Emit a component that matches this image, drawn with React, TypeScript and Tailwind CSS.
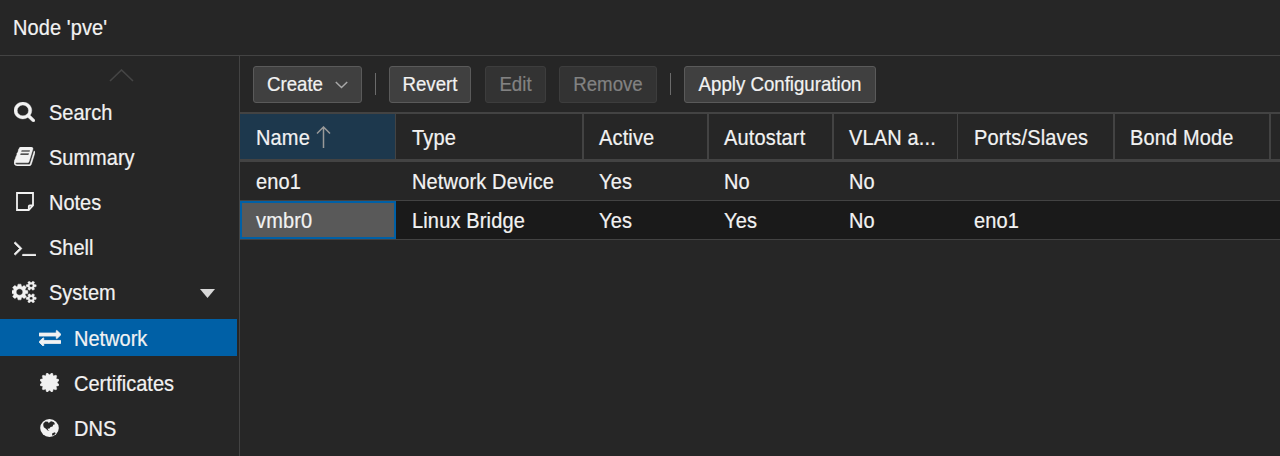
import React from "react";

const GEAR_SMALL =
  "v140q0 16-149 31-12 27-30 52 51 113 51 138 0 4-4 7-122 71-124 71-8 0-46-47t-52-68q-20 2-30 2t-30-2q-14 21-52 68t-46 47q-2 0-124-71-4-3-4-7 0-25 51-138-18-25-30-52-149-15-149-31v-140q0-16 149-31 13-29 30-52-51-113-51-138 0-4 4-7 4-2 35-20t59-34 30-16q8 0 46 46.5t52 67.5q20-2 30-2t30 2q51-71 92-112l6-2q4 0 124 70 4 3 4 7 0 25-51 138 17 23 30 52 149 15 149 31z";

const paths = {
  search:
    "M1216 832q0-185-131.5-316.5t-316.5-131.5-316.5 131.5-131.5 316.5 131.5 316.5 316.5 131.5 316.5-131.5 131.5-316.5zm512 832q0 52-38 90t-90 38q-54 0-90-38l-343-342q-179 124-399 124-143 0-273.5-55.5t-225-150-150-225-55.5-273.5 55.5-273.5 150-225 225-150 273.5-55.5 273.5 55.5 225 150 150 225 55.5 273.5q0 220-124 399l343 343q37 37 37 90z",
  book: "M1703 478q40 57 18 129l-275 906q-19 64-76.5 107.5t-122.5 43.5h-923q-77 0-148.5-53.5t-99.5-131.5q-24-67-2-127 0-4 3-27t4-37q1-8-3-21.5t-3-19.5q2-11 8-21t16.5-23.5 16.5-23.5q23-38 45-91.5t30-91.5q3-10 .5-30t-.5-28q3-11 17-28t17-23q21-36 42-92t25-90q1-9-2.5-32t.5-28q4-13 22-30.5t22-22.5q19-26 42.5-84.5t27.5-96.5q1-8-3-25.5t-2-26.5q2-8 9-18t18-23 17-21q8-12 16.5-30.5t15-35 16-36 19.5-32 26.5-23.5 36-11.5 47.5 5.5l-1 3q38-9 51-9h761q74 0 114 56t18 130l-274 906q-36 119-71.5 153.5t-128.5 34.5h-869q-27 0-38 15-11 16-1 43 24 70 144 70h923q29 0 56-15.5t35-41.5l300-987q7-22 5-57 38 15 59 43zm-1064 2q-4 13 2 22.5t20 9.5h608q13 0 25.5-9.5t16.5-22.5l21-64q4-13-2-22.5t-20-9.5h-608q-13 0-25.5 9.5t-16.5 22.5zm-83 256q-4 13 2 22.5t20 9.5h608q13 0 25.5-9.5t16.5-22.5l21-64q4-13-2-22.5t-20-9.5h-608q-13 0-25.5 9.5t-16.5 22.5z",
  terminal:
    "M649 983l-466 466q-10 10-23 10t-23-10l-50-50q-10-10-10-23t10-23l393-393-393-393q-10-10-10-23t10-23l50-50q10-10 23-10t23 10l466 466q10 10 10 23t-10 23zm1079 457v64q0 14-9 23t-23 9h-960q-14 0-23-9t-9-23v-64q0-14 9-23t23-9h960q14 0 23 9t9 23z",
  cogs:
    "M832 896q0-106-75-181t-181-75-181 75-75 181 75 181 181 75 181-75 75-181zm768 512q0-52-38-90t-90-38-90 38-38 90q0 53 37.5 90.5t90.5 37.5 90.5-37.5 37.5-90.5zm0-1024q0-52-38-90t-90-38-90 38-38 90q0 53 37.5 90.5t90.5 37.5 90.5-37.5 37.5-90.5zm-384 421v185q0 10-7 19.5t-16 10.5l-155 24q-11 35-32 76 34 48 90 115 7 11 7 20 0 12-7 19-23 30-82.5 89.5t-78.5 59.5q-11 0-21-7l-115-90q-37 19-77 31-11 108-23 155-7 24-30 24h-186q-11 0-20-7.5t-10-17.5l-23-153q-34-10-75-31l-118 89q-7 7-20 7-11 0-21-8-144-133-144-160 0-9 7-19 10-14 41-53t47-61q-23-44-35-82l-152-24q-10-1-17-9.5t-7-19.5v-185q0-10 7-19.5t16-10.5l155-24q11-35 32-76-34-48-90-115-7-11-7-20 0-12 7-20 22-30 82-89t79-59q11 0 21 7l115 90q34-18 77-32 11-108 23-154 7-24 30-24h186q11 0 20 7.5t10 17.5l23 153q34 10 75 31l118-89q8-7 20-7 11 0 21 8 144 133 144 160 0 8-7 19-12 16-42 54t-45 60q23 48 34 82l152 23q10 2 17 10.5t7 19.5zm640 533" +
    GEAR_SMALL +
    "m0-1024" +
    GEAR_SMALL,
  exchange:
    "M1792 1184v192q0 13-9.5 22.5t-22.5 9.5h-1376v192q0 13-9.5 22.5t-22.5 9.5q-12 0-24-10l-319-320q-9-9-9-22 0-14 9-23l320-320q9-9 23-9 13 0 22.5 9.5t9.5 22.5v192h1376q13 0 22.5 9.5t9.5 22.5zm0-544q0 14-9 23l-320 320q-9 9-23 9-13 0-22.5-9.5t-9.5-22.5v-192h-1376q-13 0-22.5-9.5t-9.5-22.5v-192q0-13 9.5-22.5t22.5-9.5h1376v-192q0-14 9-23t23-9q12 0 24 10l319 319q9 9 9 23z",
  certificate:
    "M1504 896l138 135q30 28 20 70-12 41-52 51l-188 48 53 186q12 41-19 70-29 31-70 19l-186-53-48 188q-10 40-51 52-12 2-19 2-31 0-51-22l-135-138-135 138q-28 30-70 20-41-11-51-52l-48-188-186 53q-41 12-70-19-31-29-19-70l53-186-188-48q-40-10-52-51-10-42 20-70l138-135-138-135q-30-28-20-70 12-41 52-51l188-48-53-186q-12-41 19-70 29-31 70-19l186 53 48-188q10-41 51-51 41-12 70 19l135 139 135-139q29-30 70-19 41 10 51 51l48 188 186-53q41-12 70 19 31 29 19 70l-53 186 188 48q40 10 52 51 10 42-20 70z",
};

function Glyph({ d, box, className, weight = 0 }: { d: string; box: string; className: string; weight?: number }) {
  return (
    <svg
      viewBox={box}
      className={className}
      fill="currentColor"
      stroke="currentColor"
      strokeWidth={weight}
      preserveAspectRatio="none"
      aria-hidden="true"
    >
      <path d={d} />
    </svg>
  );
}

function NoteIcon() {
  return (
    <svg className="h-[19px] w-[18px]" viewBox="0 0 18 19" fill="none" stroke="currentColor" strokeWidth="1.8" aria-hidden="true">
      <path d="M12.5 18H1V1h16v12.5L12.8 18v-3.5q0-1 1-1H17" />
    </svg>
  );
}

function GlobeIcon() {
  return (
    <svg className="h-[18px] w-[19px]" viewBox="0 0 19 18" aria-hidden="true">
      <ellipse cx="9.5" cy="9" rx="9.3" ry="9" fill="currentColor" />
      <path
        fill="#262626"
        d="M3.5 4.2 5.5 2.6 8 2.8 8.8 4.2 10 2.7 11.5 2.2 14 3.2 15 5.2 13.2 5.8 12.6 7.4 10.6 8 9.2 9.8 7.6 9.4 8.2 11.2 9.6 12 8 11.8 5.6 9.6 3.8 8.2 3.2 6zM12.3 14.2l2.7-1 .6 1.2-1.8 1.8-1.8.4z"
      />
    </svg>
  );
}

function Label({ children }: { children: React.ReactNode }) {
  return (
    <span className="inline-block translate-y-[0.5px] scale-y-[1.06] [-webkit-text-stroke:0.2px_currentColor]">{children}</span>
  );
}

type Item = { label: string; icon: React.ReactNode; sub?: boolean; active?: boolean; caret?: boolean };

const items: Item[] = [
  { label: "Search", icon: <Glyph d={paths.search} box="64 128 1664 1664" className="h-[20px] w-[21px]" weight={30} /> },
  { label: "Summary", icon: <Glyph d={paths.book} box="64 128 1664 1536" className="h-[19px] w-[21px]" weight={30} /> },
  { label: "Notes", icon: <NoteIcon /> },
  { label: "Shell", icon: <Glyph d={paths.terminal} box="64 384 1664 1152" className="mt-[3px] h-[15px] w-[22px]" weight={50} /> },
  { label: "System", icon: <Glyph d={paths.cogs} box="0 0 1920 1792" className="h-[22px] w-[25px]" weight={35} />, caret: true },
  {
    label: "Network",
    icon: <Glyph d={paths.exchange} box="0 160 1792 1472" className="h-[17px] w-[22px]" weight={70} />,
    sub: true,
    active: true,
  },
  { label: "Certificates", icon: <Glyph d={paths.certificate} box="128 128 1536 1536" className="h-[19px] w-[19px]" weight={40} />, sub: true },
  { label: "DNS", icon: <GlobeIcon />, sub: true },
];

function Sidebar() {
  return (
    <nav className="flex w-[240px] shrink-0 flex-col border-r border-[#434343]">
      <div className="flex h-[33px] justify-center pt-[13px] pl-[3px]">
        <svg className="h-[13px] w-[25px]" viewBox="0 0 25 13" fill="none" stroke="#454545" strokeWidth="1.6" aria-hidden="true">
          <path d="M1 12 12.5 1 24 12" />
        </svg>
      </div>
      {items.map((it) => (
        <div key={it.label} className="flex h-[45.2px] shrink-0 items-center">
          <div className={`flex h-[37px] w-[237px] items-center ${it.active ? "bg-[#0060a6]" : ""} ${it.sub ? "pl-[25px]" : ""}`}>
            <span className="flex w-[49px] justify-center">{it.icon}</span>
            <span className="flex-1">
              <Label>{it.label}</Label>
            </span>
            {it.caret && (
              <svg className="mt-[2px] mr-[22px] h-[9px] w-[15px]" viewBox="0 0 15 9" fill="#d8d8d8" aria-hidden="true">
                <path d="M0 0h15L7.5 9z" />
              </svg>
            )}
          </div>
        </div>
      ))}
    </nav>
  );
}

function Button({ children, className, disabled }: { children: React.ReactNode; className: string; disabled?: boolean }) {
  return (
    <button
      disabled={disabled}
      className={`flex h-[37px] items-center justify-center rounded-[3px] border text-[18.67px] tracking-normal whitespace-nowrap ${
        disabled ? "border-[#3d3d3d] bg-[#333333] text-[#828282]" : "border-[#5a5a5a] bg-[#404040] text-[#f2f2f2]"
      } ${className}`}
    >
      {children}
    </button>
  );
}

function Toolbar() {
  return (
    <div className="flex h-[58px] items-start border-b-2 border-[#434343] pt-[10px] pl-[13px]">
      <Button className="w-[109px] gap-[12px]">
        <Label>Create</Label>
        <svg className="h-[8px] w-[13px]" viewBox="0 0 13 8" fill="none" stroke="#a8a8a8" strokeWidth="1.5" aria-hidden="true">
          <path d="M.8 1 6.5 6.5 12.2 1" />
        </svg>
      </Button>
      <i className="mt-[7px] ml-[13px] h-[22px] w-px bg-[#6b6b6b]" />
      <Button className="ml-[13px] w-[82px]"><Label>Revert</Label></Button>
      <Button className="ml-[14px] w-[61px]" disabled><Label>Edit</Label></Button>
      <Button className="ml-[13px] w-[98px]" disabled><Label>Remove</Label></Button>
      <i className="mt-[7px] ml-[13px] h-[22px] w-px bg-[#6b6b6b]" />
      <Button className="ml-[13px] w-[192px]"><Label>Apply Configuration</Label></Button>
    </div>
  );
}

const columns = [
  { title: "Name", width: "w-[156px] border-r bg-[#1d384d] pl-4", cell: "w-[156px]", sorted: true },
  { title: "Type", width: "w-[188px] border-r-2 pl-4", cell: "w-[187px]" },
  { title: "Active", width: "w-[125px] border-r-2 pl-[15px]", cell: "w-[125px]" },
  { title: "Autostart", width: "w-[125px] border-r-2 pl-[15px]", cell: "w-[125px]" },
  { title: "VLAN a...", width: "w-[124px] border-r pl-[15px]", cell: "w-[125px]" },
  { title: "Ports/Slaves", width: "w-[157px] border-r-2 pl-4", cell: "w-[156px]" },
  { title: "Bond Mode", width: "w-[156px] border-r-2 pl-[15px]", cell: "w-[156px]" },
];

const rows = [
  ["eno1", "Network Device", "Yes", "No", "No", "", ""],
  ["vmbr0", "Linux Bridge", "Yes", "Yes", "No", "eno1", ""],
];

function Grid() {
  return (
    <div className="tracking-[0.15px]">
      <div className="flex h-[48px] border-b-[3px] border-[#434343]">
        {columns.map((c) => (
          <div key={c.title} className={`flex shrink-0 items-center border-[#434343] whitespace-nowrap ${c.width}`}>
            <Label>{c.title}</Label>
            {c.sorted && (
              <svg className="ml-[6px] h-[22px] w-[15px]" viewBox="0 0 15 22" fill="none" stroke="#999" strokeWidth="1.5" aria-hidden="true">
                <path d="M7.5 22V1M1 7.5 7.5 1 14 7.5" />
              </svg>
            )}
          </div>
        ))}
      </div>
      {rows.map((r, i) => (
        <div key={r[0]} className={`flex h-[39px] border-b border-[#434343] ${i === 1 ? "bg-[#1a1a1a]" : ""}`}>
          {r.map((v, j) => (
            <div
              key={j}
              className={`flex shrink-0 items-center whitespace-nowrap ${columns[j].cell} ${
                i === 1 && j === 0 ? "border-2 border-[#0060a6] bg-[#595959] pl-[14px]" : "pl-4"
              }`}
            >
              <Label>{v}</Label>
            </div>
          ))}
        </div>
      ))}
    </div>
  );
}

export default function App() {
  return (
    <div className="flex h-[456px] w-[1280px] flex-col overflow-hidden bg-[#262626] font-['Liberation_Sans',Arial,sans-serif] text-[20px] leading-none text-[#f2f2f2]">
      <header className="flex h-14 shrink-0 items-center border-b border-[#434343] pb-[2px] pl-[13px] tracking-[0.1px]">
        <Label>Node 'pve'</Label>
      </header>
      <div className="flex min-h-0 flex-1">
        <Sidebar />
        <main className="min-w-0 flex-1 overflow-hidden">
          <Toolbar />
          <Grid />
        </main>
      </div>
    </div>
  );
}
